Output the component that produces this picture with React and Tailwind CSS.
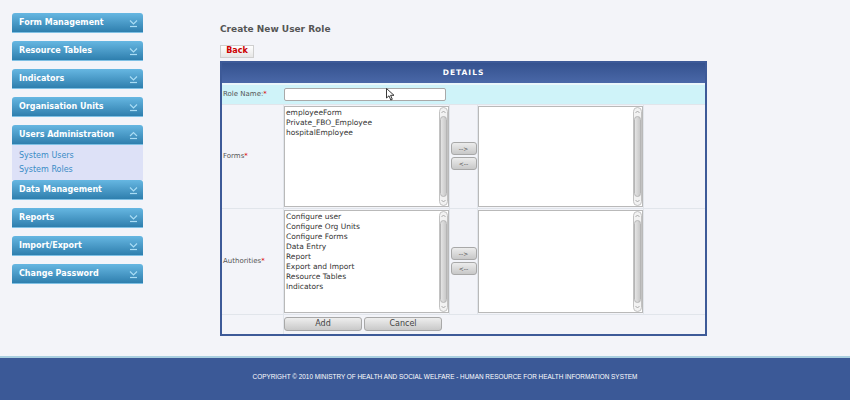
import React from "react";

const menu = [
  "Form Management",
  "Resource Tables",
  "Indicators",
  "Organisation Units",
  "Users Administration",
  "Data Management",
  "Reports",
  "Import/Export",
  "Change Password",
];

function Chevron({ up }) {
  return (
    <svg width="9" height="10" viewBox="0 0 9 10" className="shrink-0">
      <path
        d={up ? "M1 6 L4.5 2.5 L8 6" : "M1 2.5 L4.5 6 L8 2.5"}
        fill="none"
        stroke="#a9dcf4"
        strokeWidth="1.2"
      />
      <path d="M1 8.5 H8" stroke="#a9dcf4" strokeWidth="1.2" />
    </svg>
  );
}

function MenuItem({ label, open }) {
  return (
    <div className="flex h-[20px] items-center justify-between rounded-t-[3px] border-b border-[#7fc0e4] bg-gradient-to-b from-[#66b7e2] to-[#2e7fae] pl-[7px] pr-[5px]">
      <span className="text-[8px] font-bold text-white">{label}</span>
      <Chevron up={open} />
    </div>
  );
}

function Scrollbar() {
  return (
    <div className="flex w-[9px] flex-col items-center rounded-full border border-[#c2c2c2] bg-[#f2f2f2]">
      <div className="flex h-[8px] items-center justify-center">
        <svg width="5" height="4" viewBox="0 0 5 4">
          <path d="M0.5 3 L2.5 1 L4.5 3" fill="none" stroke="#9a9a9a" strokeWidth="0.8" />
        </svg>
      </div>
      <div className="w-[7px] flex-1 rounded-full border border-[#b5b5b5] bg-gradient-to-r from-[#e4e4e4] to-[#c9c9c9]" />
      <div className="flex h-[8px] items-center justify-center">
        <svg width="5" height="4" viewBox="0 0 5 4">
          <path d="M0.5 1 L2.5 3 L4.5 1" fill="none" stroke="#9a9a9a" strokeWidth="0.8" />
        </svg>
      </div>
    </div>
  );
}

function ListBox({ items = [] }) {
  return (
    <div className="flex h-full border border-[#b9b9b9] bg-white">
      <div className="flex-1 pl-[1px] pt-[1px] text-[7.5px] leading-[10px] text-[#333]">
        {items.map((it) => (
          <div key={it}>{it}</div>
        ))}
      </div>
      <Scrollbar />
    </div>
  );
}

function SmallBtn({ children }) {
  return (
    <div className="flex h-[13px] w-[26px] items-center justify-center rounded-[3px] border border-[#a8a8a8] bg-gradient-to-b from-[#ececec] to-[#c8c8c8] text-[6px] text-[#444]">
      {children}
    </div>
  );
}

function Transfer() {
  return (
    <div className="flex h-full flex-col items-center justify-center gap-[2px]">
      <SmallBtn>--&gt;</SmallBtn>
      <SmallBtn>&lt;--</SmallBtn>
    </div>
  );
}

function PickRow({ label, items, h }) {
  return (
    <div className={`flex border-b border-[#e1e5eb] ${h}`}>
      <div className="flex w-[62px] items-center border-r border-[#e1e5eb] pl-[1px] text-[7px] text-[#555]">
        {label}
        <span className="text-[#d00]">*</span>
      </div>
      <div className="w-[165px] py-[1px]">
        <ListBox items={items} />
      </div>
      <div className="w-[29px] border-x border-[#e1e5eb]">
        <Transfer />
      </div>
      <div className="w-[166px] border-r border-[#e1e5eb] py-[1px]">
        <ListBox />
      </div>
      <div className="flex-1" />
    </div>
  );
}

export default function App() {
  return (
    <div
      className="relative flex h-[400px] w-[850px] flex-col bg-[#f3f4f9]"
      style={{ fontFamily: '"DejaVu Sans", Verdana, sans-serif' }}
    >
      <div className="flex flex-1">
        <aside className="ml-[12px] mt-[13px] flex w-[131px] flex-col gap-[8px]">
          {menu.map((m) =>
            m === "Users Administration" ? (
              <div key={m} className="flex flex-col">
                <MenuItem label={m} open />
                <div className="flex h-[35px] flex-col justify-center gap-[2px] bg-[#dde1f7] pl-[7px] text-[8px] text-[#3a8cc6]">
                  <div>System Users</div>
                  <div>System Roles</div>
                </div>
                <div className="-mb-[8px]" />
              </div>
            ) : (
              <MenuItem key={m} label={m} />
            )
          )}
        </aside>

        <main className="ml-[77px] mt-[23px] flex w-[487px] flex-col">
          <h1 className="text-[9px] font-bold text-[#555]">Create New User Role</h1>
          <div className="mt-[8px] flex h-[13px] w-[34px] items-center justify-center border border-[#cfcfcf] bg-gradient-to-b from-white to-[#e6e6e6] text-[8px] font-bold text-[#c00]">
            Back
          </div>

          <div className="mt-[3px] border-2 border-[#3d5a98]">
            <div className="flex h-[20px] items-center justify-center bg-gradient-to-b from-[#35528f] to-[#4a68a8] text-[7.5px] font-bold tracking-[1px] text-white">
              DETAILS
            </div>
            <div className="h-[2px] bg-[#eaf7fb]" />
            <div className="flex h-[20px] items-center border-b border-[#e1e5eb] bg-[#cff3f9]">
              <div className="w-[62px] pl-[1px] text-[7px] text-[#555]">
                Role Name:<span className="text-[#d00]">*</span>
              </div>
              <input className="h-[13px] w-[162px] rounded-[2px] border border-[#a9a9a9] bg-white" />
            </div>
            <PickRow
              label="Forms"
              h="h-[104px]"
              items={["employeeForm", "Private_FBO_Employee", "hospitalEmployee"]}
            />
            <PickRow
              label="Authorities"
              h="h-[106px]"
              items={[
                "Configure user",
                "Configure Org Units",
                "Configure Forms",
                "Data Entry",
                "Report",
                "Export and Import",
                "Resource Tables",
                "Indicators",
              ]}
            />
            <div className="flex h-[19px] items-center">
              <div className="h-full w-[62px] border-r border-[#e1e5eb]" />
              <div className="flex gap-[2px]">
                <button className="h-[14px] w-[78px] rounded-[3px] border border-[#a8a8a8] bg-gradient-to-b from-[#eeeeee] to-[#c9c9c9] text-[8px] text-[#444]">
                  Add
                </button>
                <button className="h-[14px] w-[78px] rounded-[3px] border border-[#a8a8a8] bg-gradient-to-b from-[#eeeeee] to-[#c9c9c9] text-[8px] text-[#444]">
                  Cancel
                </button>
              </div>
            </div>
          </div>
        </main>
      </div>

      <footer className="flex h-[44px] items-start justify-center border-t-2 border-[#a9cfe0] bg-[#3b5997] pl-[40px] pt-[14px]">
        <span
          className="text-[6.4px] text-white"
          style={{ fontFamily: '"Liberation Sans", Arial, sans-serif' }}
        >
          COPYRIGHT © 2010 MINISTRY OF HEALTH AND SOCIAL WELFARE - HUMAN RESOURCE FOR HEALTH INFORMATION SYSTEM
        </span>
      </footer>

      <svg
        className="absolute left-[386px] top-[88px]"
        width="9"
        height="13"
        viewBox="0 0 9 13"
      >
        <path d="M0.5 0.5 L0.5 10 L3 7.8 L4.8 12 L6.3 11.3 L4.6 7.3 L8 7.3 Z" fill="white" stroke="#222" strokeWidth="0.9" />
      </svg>
    </div>
  );
}
